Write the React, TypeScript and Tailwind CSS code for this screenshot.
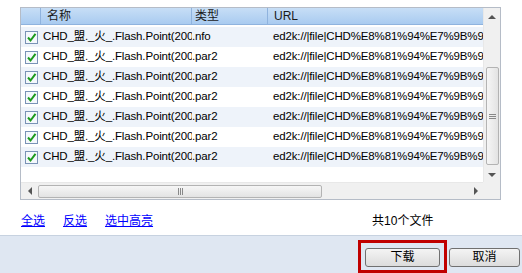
import React from "react";

const ROWS = [".nfo", ".par2", ".par2", ".par2", ".par2", ".par2", ".par2"];

const FONT = { fontFamily: '"Liberation Sans", "Noto Sans CJK SC", sans-serif' };

function Check() {
  return (
    <svg width="13" height="13" viewBox="0 0 13 13">
      <rect x="0.5" y="0.5" width="12" height="12" fill="#f4f8fc" stroke="#7a93b6" />
      <path d="M3 6.5 L5.5 9.5 L10.5 2.8" fill="none" stroke="#1d9a1d" strokeWidth="2" />
    </svg>
  );
}

function Arrow({ dir }: { dir: "up" | "down" | "left" | "right" }) {
  const pts = {
    up: "0,4 4,0 8,4",
    down: "0,0 8,0 4,4",
    left: "4,0 4,8 0,4",
    right: "0,0 0,8 4,4",
  }[dir];
  const v = dir === "up" || dir === "down";
  return (
    <svg width={v ? 8 : 4} height={v ? 4 : 8}>
      <polygon points={pts} fill="#555" />
    </svg>
  );
}

export default function App() {
  return (
    <div className="w-[522px] h-[273px] bg-white flex flex-col overflow-hidden text-[12px]" style={FONT}>
      <div className="pt-[7px] pl-[20px]">
        <div className="w-[481px] h-[193px] border border-[#b5bcc7] grid grid-cols-[1fr_17px] grid-rows-[1fr_17px]">
          <div className="overflow-hidden">
            <div className="flex h-[17px] bg-gradient-to-b from-[#c7def6] to-[#a9cbf0] border-b border-[#8fb3de] text-[#1a1a1a]">
              <div className="w-[20px] border-r border-[#8fb3de]" />
              <div className="w-[151px] border-r border-[#8fb3de] pl-[6px] leading-[16px]">名称</div>
              <div className="w-[76px] border-r border-[#8fb3de] pl-[3px] leading-[16px]">类型</div>
              <div className="flex-1 pl-[6px] leading-[16px]">URL</div>
            </div>
            <div className="mt-[2px] text-[11.5px] tracking-[-0.15px]">
              {ROWS.map((ext, i) => (
                <div key={i} className={`flex h-[20px] items-center ${i % 2 === 0 ? "bg-[#eef3fa]" : "bg-white"}`}>
                  <div className="w-[20px] pl-[4px] flex items-center">
                    <Check />
                  </div>
                  <div className="w-[151px] overflow-hidden whitespace-nowrap pl-[2px] text-black">
                    CHD_盟._火_.Flash.Point(200
                  </div>
                  <div className="w-[76px] whitespace-nowrap">{ext}</div>
                  <div className="flex-1 overflow-hidden whitespace-nowrap pl-[5px]">
                    ed2k://|file|CHD%E8%81%94%E7%9B%9
                  </div>
                </div>
              ))}
            </div>
          </div>
          <div className="bg-[#f0f0f0] border-l border-[#e8e8e8] flex flex-col items-center">
            <div className="h-[17px] flex items-center justify-center">
              <Arrow dir="up" />
            </div>
            <div className="h-[42px]" />
            <div className="w-[13px] h-[98px] rounded-[2px] border border-[#b3b3b3] bg-gradient-to-r from-[#f6f6f6] to-[#e3e3e3] flex items-center justify-center">
              <div className="flex flex-col gap-[1px]">
                <div className="w-[7px] h-[1px] bg-[#888]" />
                <div className="w-[7px] h-[1px] bg-[#888]" />
                <div className="w-[7px] h-[1px] bg-[#888]" />
              </div>
            </div>
            <div className="flex-1 flex items-end pb-[5px]">
              <Arrow dir="down" />
            </div>
          </div>
          <div className="bg-[#f0f0f0] border-t border-[#e8e8e8] flex items-center">
            <div className="w-[17px] flex justify-center">
              <Arrow dir="left" />
            </div>
            <div className="w-[284px] h-[13px] rounded-[2px] border border-[#b3b3b3] bg-gradient-to-b from-[#f6f6f6] to-[#e3e3e3] flex items-center justify-center">
              <div className="flex gap-[1px]">
                <div className="w-[1px] h-[7px] bg-[#888]" />
                <div className="w-[1px] h-[7px] bg-[#888]" />
                <div className="w-[1px] h-[7px] bg-[#888]" />
              </div>
            </div>
            <div className="flex-1 flex justify-end pr-[5px]">
              <Arrow dir="right" />
            </div>
          </div>
          <div className="bg-[#f0f0f0]" />
        </div>
      </div>
      <div className="h-[37px] flex items-center pl-[21px] pt-[6px]">
        <a className="text-[#0000ff] underline">全选</a>
        <a className="text-[#0000ff] underline ml-[18px]">反选</a>
        <a className="text-[#0000ff] underline ml-[18px]">选中高亮</a>
        <span className="ml-[219px] text-black">共10个文件</span>
      </div>
      <div className="flex-1 bg-[#dfe7f2] border-t border-[#c7d2e0] flex justify-end items-start pt-[4px] pr-[2px]">
        <div className="border-[3px] border-[#c00000] px-[4px] pt-[5px] pb-[3px]">
          <button className="w-[75px] h-[19px] rounded-[3px] border border-[#707070] bg-gradient-to-b from-[#f4f4f4] to-[#dcdcdc] leading-[17px] text-black">
            下载
          </button>
        </div>
        <div className="pt-[8px] ml-[2px]">
          <button className="w-[71px] h-[19px] rounded-[3px] border border-[#707070] bg-gradient-to-b from-[#f4f4f4] to-[#dcdcdc] leading-[17px] text-black">
            取消
          </button>
        </div>
      </div>
    </div>
  );
}
